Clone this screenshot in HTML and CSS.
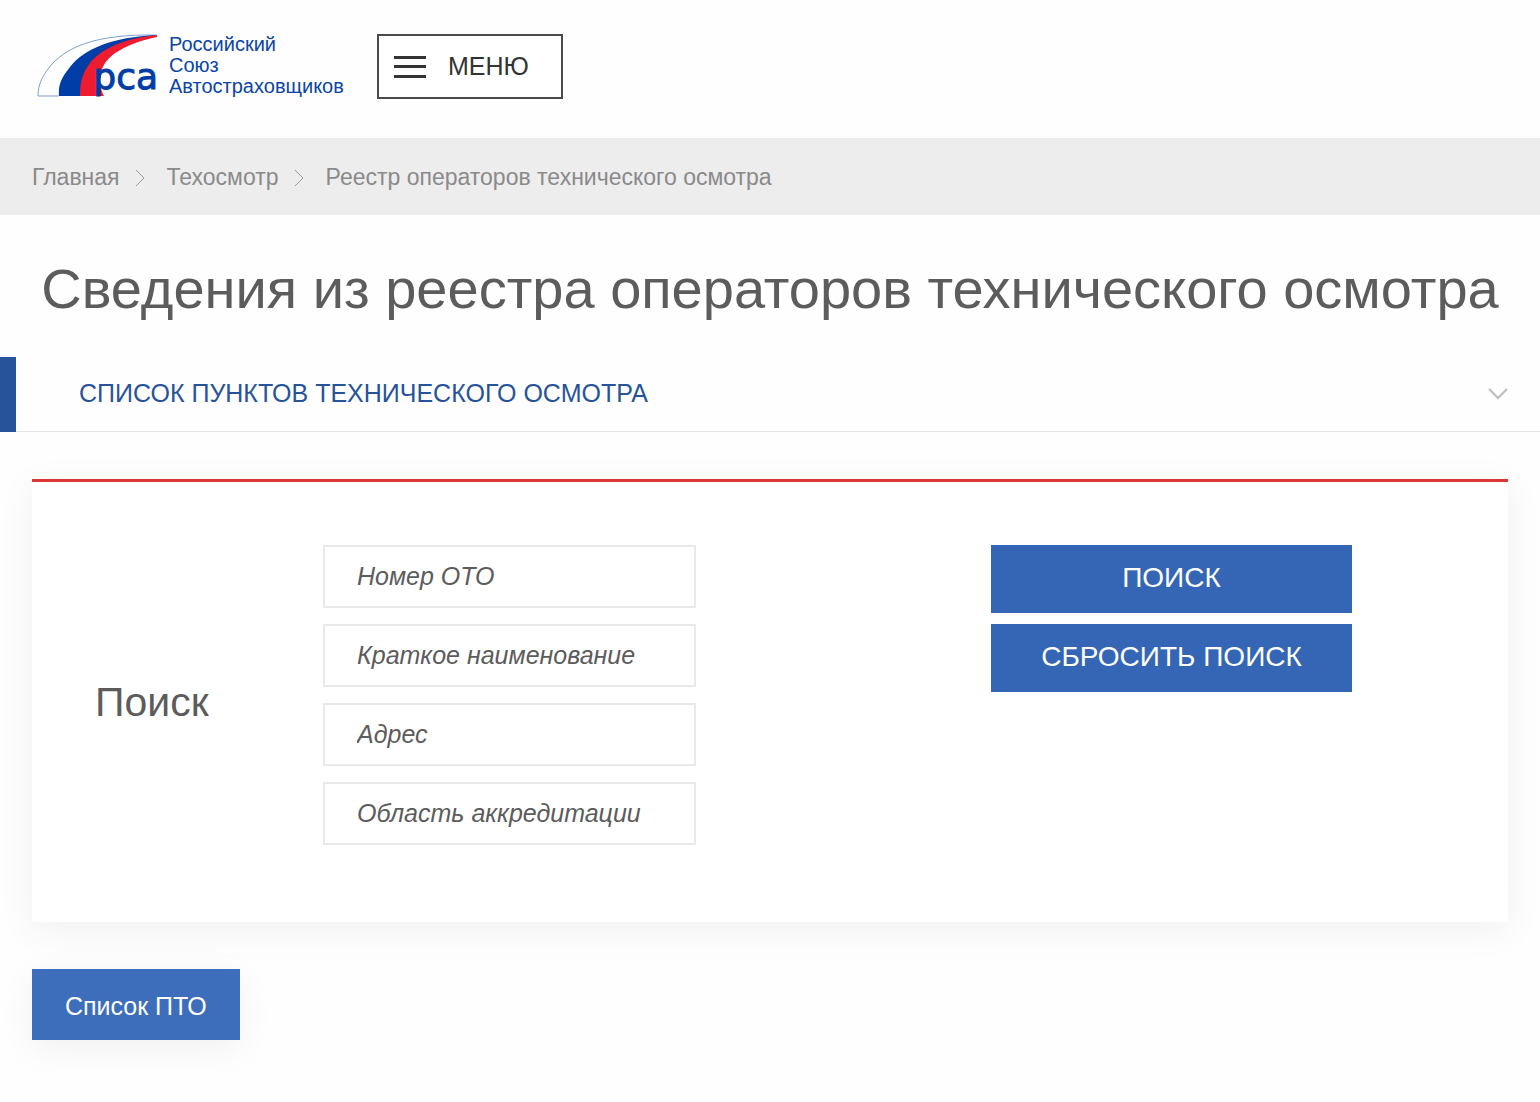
FILE: index.html
```html
<!DOCTYPE html>
<html lang="ru">
<head>
<meta charset="utf-8">
<meta name="viewport" content="width=device-width, initial-scale=1">
<title>Реестр операторов технического осмотра</title>
<link rel="stylesheet" href="styles.css">
</head>
<body>
<header class="header">
  <a class="logo" href="#">
    <svg class="logo-mark" viewBox="0 0 121 63" aria-hidden="true">
      <path class="logo-arc" d="M1 62C1 50 6 40 16 29C32 13 58 0 120 1M1 62H22"/>
      <path class="logo-blue" d="M22 62C21 50 25 43 33 33C47 15 75 3 120 1C84 10 48 20 48 62Z"/>
      <path class="logo-red" d="M43 62C43 47 46 38 53 29C66 13 90 4 120 1V3C96 8 64 20 64 42C62 50 64 56 67 62Z"/>
      <text class="logo-letters" x="121" y="55" text-anchor="end">рса</text>
    </svg>
    <span class="logo-name">Российский<br>Союз<br>Автостраховщиков</span>
  </a>
  <button class="menu-button" type="button">
    <span class="burger" aria-hidden="true"></span>
    МЕНЮ
  </button>
</header>

<nav class="breadcrumbs" aria-label="Навигация">
  <a href="#">Главная</a>
  <svg class="crumb-arrow" viewBox="0 0 10 18" aria-hidden="true"><path d="M1 1L9 9L1 17"/></svg>
  <a href="#">Техосмотр</a>
  <svg class="crumb-arrow" viewBox="0 0 10 18" aria-hidden="true"><path d="M1 1L9 9L1 17"/></svg>
  <span>Реестр операторов технического осмотра</span>
</nav>

<main>
  <h1 class="title">Сведения из реестра операторов технического осмотра</h1>

  <button class="section-toggle" type="button">
    <span>СПИСОК ПУНКТОВ ТЕХНИЧЕСКОГО ОСМОТРА</span>
    <svg class="toggle-arrow" viewBox="0 0 22 14" aria-hidden="true"><path d="M2 2L11 11L20 2"/></svg>
  </button>

  <form class="search-card">
    <h2 class="search-title">Поиск</h2>
    <div class="fields">
      <input class="field" type="text" placeholder="Номер ОТО" aria-label="Номер ОТО">
      <input class="field" type="text" placeholder="Краткое наименование" aria-label="Краткое наименование">
      <input class="field" type="text" placeholder="Адрес" aria-label="Адрес">
      <input class="field" type="text" placeholder="Область аккредитации" aria-label="Область аккредитации">
    </div>
    <div class="actions">
      <button class="action" type="submit">ПОИСК</button>
      <button class="action" type="reset">СБРОСИТЬ ПОИСК</button>
    </div>
  </form>

  <a class="list-link" href="#">Список ПТО</a>
</main>
</body>
</html>
```
FILE: styles.css
```css
* {
  box-sizing: border-box;
}

body {
  margin: 0;
  background: #fefefe;
  color: #5c5c5c;
  font-family: "Liberation Sans", Arial, sans-serif;
}

button,
input {
  font-family: inherit;
}

a {
  color: inherit;
  text-decoration: none;
}

.header {
  display: flex;
  align-items: flex-start;
  gap: 33px;
  padding: 34px 37px 39px;
}

.logo {
  display: flex;
  gap: 11px;
}

.logo-mark {
  width: 121px;
  height: 63px;
  overflow: visible;
}

.logo-arc {
  fill: none;
  stroke: #7f9fd3;
  stroke-width: 1;
}

.logo-blue {
  fill: #003da6;
}

.logo-red {
  fill: #ee1c2e;
}

.logo-letters {
  fill: #003da6;
  font: 36px "DejaVu Sans", sans-serif;
  stroke: #003da6;
  stroke-width: 1;
}

.logo-name {
  color: #0b45a8;
  font-size: 20px;
  line-height: 21px;
}

.menu-button {
  display: flex;
  align-items: center;
  gap: 22px;
  height: 65px;
  padding: 0 32px 0 15px;
  border: 2px solid #4a4a4a;
  background: #fff;
  color: #333;
  font-size: 25px;
}

.burger {
  width: 32px;
  height: 22px;
  border: solid #333;
  border-width: 3px 0;
  background: linear-gradient(#333, #333) center / 100% 3px no-repeat;
}

.breadcrumbs {
  display: flex;
  align-items: center;
  padding: 26px 32px 24px;
  background: #ededed;
  color: #8a8a8a;
  font-size: 23px;
  line-height: 27px;
}

.crumb-arrow {
  width: 10px;
  height: 18px;
  margin: 0 22px 0 15px;
  fill: none;
  stroke: #9a9a9a;
  stroke-width: 1;
}

.title {
  margin: 0;
  padding: 40px 32px 34px;
  font-size: 56px;
  font-weight: 400;
  line-height: 68px;
  text-align: center;
}

.section-toggle {
  display: flex;
  align-items: center;
  justify-content: space-between;
  width: 100%;
  height: 75px;
  padding: 0 31px 2px 79px;
  border: 0;
  background: none;
  box-shadow: inset 16px 0 #27539b, inset 0 -1px #e6e6e6;
  color: #27539b;
  font-size: 25px;
}

.toggle-arrow {
  width: 22px;
  height: 14px;
  fill: none;
  stroke: #bdbdbd;
  stroke-width: 2;
}

.search-card {
  display: grid;
  grid-template-columns: 228fr 668fr 454fr;
  margin: 47px 32px;
  padding: 63px;
  border-top: 3px solid #dc3535;
  background: #fff;
  box-shadow: 0 8px 36px rgba(0, 0, 0, 0.06);
}

.search-title {
  align-self: center;
  margin: 0;
  font-size: 41px;
  font-weight: 400;
}

.fields {
  display: grid;
  gap: 16px;
  max-width: 373px;
  padding-bottom: 14px;
}

.field {
  width: 100%;
  height: 63px;
  padding: 0 32px 1px;
  border: 2px solid #e9e9e9;
  background: #fff;
  color: #5c5c5c;
  font-size: 25px;
  font-style: italic;
}

.field::placeholder {
  color: #5c5c5c;
}

.actions {
  display: flex;
  flex-direction: column;
  gap: 11px;
  max-width: 361px;
}

.action {
  height: 68px;
  padding: 0 0 2px;
  border: 0;
  background: #3466b5;
  color: #fff;
  font-size: 28px;
}

.list-link {
  display: inline-block;
  margin: 0 32px 58px;
  padding: 22px 33px 18px;
  background: #3d6ebb;
  box-shadow: 0 8px 36px rgba(0, 0, 0, 0.06);
  color: #fff;
  font-size: 25px;
  line-height: 31px;
}
```
